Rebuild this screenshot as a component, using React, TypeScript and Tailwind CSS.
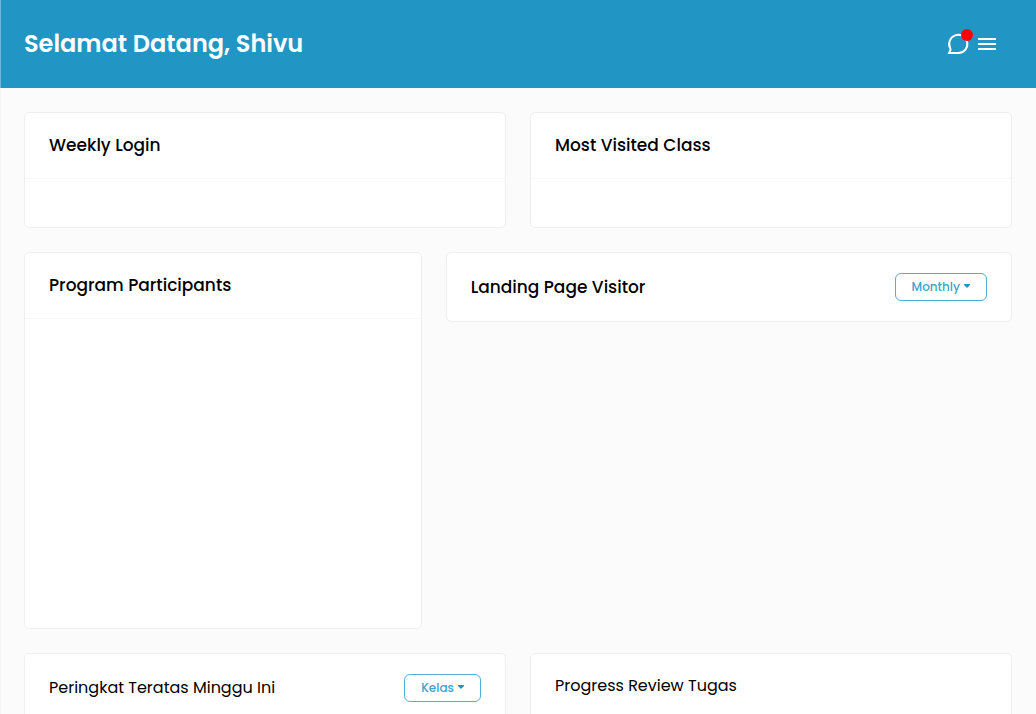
import type { ReactNode } from 'react';

function Dropdown({ label }: { label: string }) {
  return (
    <button
      type="button"
      aria-haspopup="menu"
      className="flex h-7 shrink-0 items-center gap-1 rounded-md border border-[#4db0d6] px-4 pb-px text-xs font-medium text-[#3ba5cf]"
    >
      {label}
      <svg width="6" height="4" viewBox="0 0 6 4" fill="#2196c5" className="-translate-y-px" aria-hidden="true">
        <path d="M0 0h6v1L3 4 0 1z" />
      </svg>
    </button>
  );
}

function Card({ children, className = '' }: { children: ReactNode; className?: string }) {
  return (
    <section className={`rounded-[5px] border border-[#eeeff0] bg-white ${className}`}>{children}</section>
  );
}

function TitleCard({ title, className = '', body }: { title: string; className?: string; body: string }) {
  return (
    <Card className={className}>
      <h2 className="border-b border-[#f8f8f8] px-6 pt-5 pb-[21px] text-[17px] leading-6 font-medium">{title}</h2>
      <div className={body} />
    </Card>
  );
}

export default function App() {
  return (
    <div className="min-h-screen bg-[#fbfbfb] font-['Poppins','Inter',sans-serif] text-black">
      <header className="flex h-22 items-center justify-between border-l border-[#6bb8d8] bg-[#2196c5] pr-10 pl-[23px] text-white">
        <h1 className="text-2xl font-semibold">Selamat Datang, Shivu</h1>
        <div className="flex items-center gap-2">
          <button type="button" aria-label="Messages" className="relative">
            <svg width="24" height="24" viewBox="0 0 24 24" fill="none" stroke="currentColor" strokeWidth="2" aria-hidden="true">
              <path d="M12.3 21.1a9.1 9.1 0 1 0-8-4.7c.3.6.3 1.1.1 1.7l-1.3 3h9.2z" />
            </svg>
            <span className="absolute -top-[3px] -right-[3px] size-3 rounded-full bg-[#ff0000]" />
          </button>
          <button type="button" aria-label="Menu">
            <svg width="18" height="14" viewBox="0 0 18 14" fill="currentColor" aria-hidden="true">
              <path d="M0 1h18v2H0zM0 6h18v2H0zM0 11h18v2H0z" />
            </svg>
          </button>
        </div>
      </header>

      <main className="grid grid-cols-12 items-start gap-6 border-l border-[#f5f5f5] py-6 pr-6 pl-[23px]">
        <TitleCard title="Weekly Login" className="col-span-6" body="h-12" />
        <TitleCard title="Most Visited Class" className="col-span-6" body="h-12" />

        <TitleCard title="Program Participants" className="col-span-5" body="h-[309px]" />
        <Card className="col-span-7 flex items-center justify-between px-6 py-5">
          <h2 className="text-[17px] leading-6 font-medium">Landing Page Visitor</h2>
          <Dropdown label="Monthly" />
        </Card>

        <Card className="col-span-6 flex items-center justify-between px-6 py-5">
          <h2 className="text-base">Peringkat Teratas Minggu Ini</h2>
          <Dropdown label="Kelas" />
        </Card>
        <Card className="col-span-6 px-6 py-5">
          <h2 className="text-base">Progress Review Tugas</h2>
        </Card>
      </main>
    </div>
  );
}
